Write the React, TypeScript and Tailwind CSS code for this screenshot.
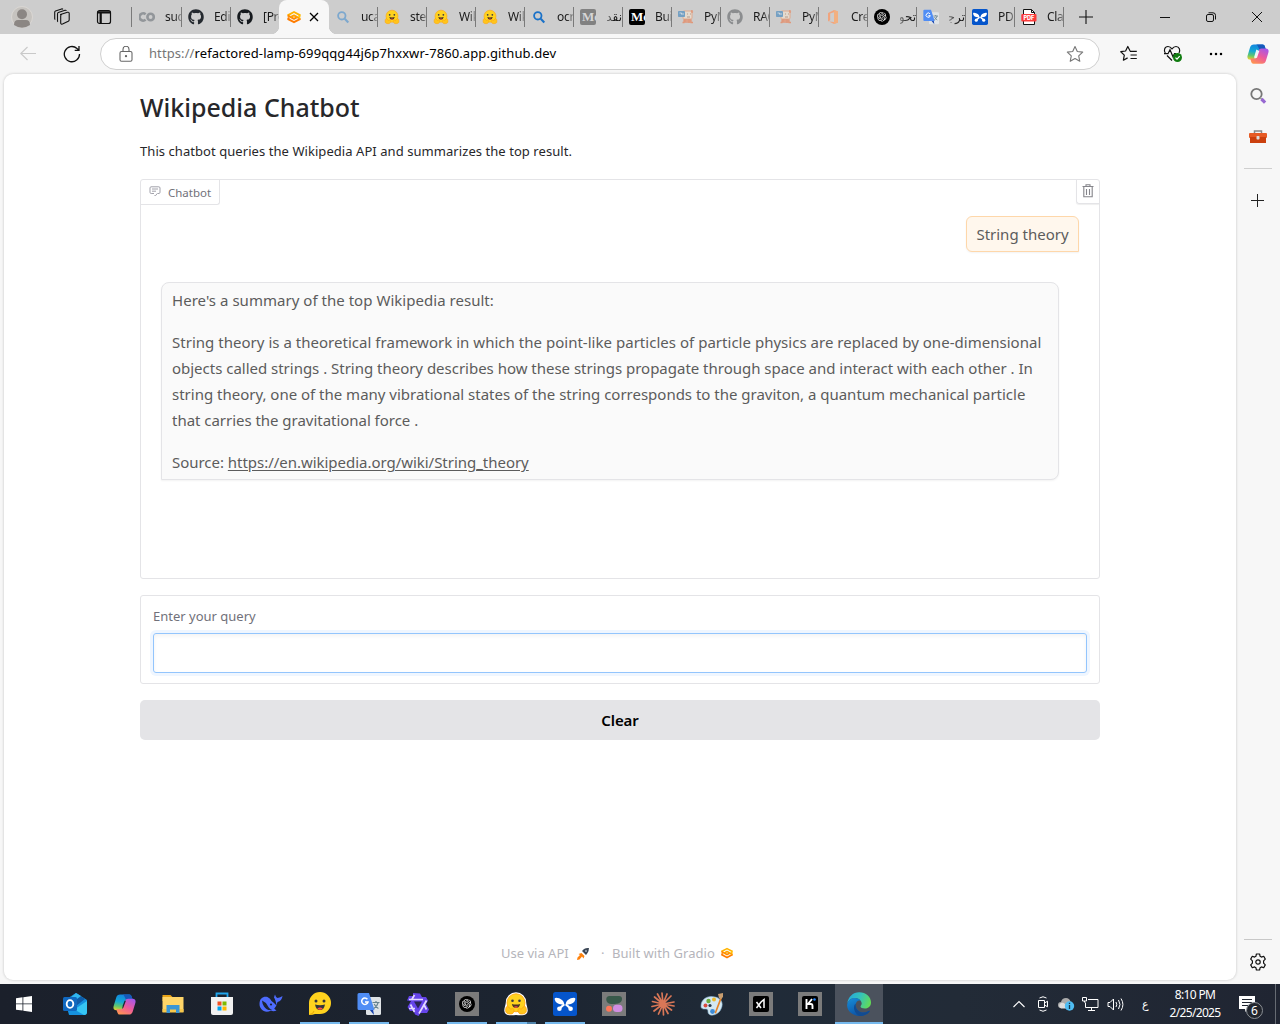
import React from 'react';
import { FaGithub } from 'react-icons/fa';
import { RiOpenaiFill } from 'react-icons/ri';

type P = { className?: string };

const Colab = () => (
  <svg viewBox="0 0 16 16" className="size-4" fill="none" stroke="#92969a" strokeWidth="2.6">
    <path d="M6.6 5.4A3.6 3.6 0 1 0 6.6 10.6" />
    <circle cx="11.6" cy="8" r="3.2" />
  </svg>
);

const Gradio = ({ className = 'size-4' }: P) => (
  <svg viewBox="0 0 16 16" className={className} fill="none" strokeWidth="1.900" strokeLinejoin="round">
    <path d="M1.600 6.400 8 3l6.400 3.400" stroke="#ffb400" />
    <path d="M1.600 9.800 8 13.200l6.400-3.400" stroke="#ff7c00" />
    <path d="M1.600 6.400 8 9.800l3-1.600" stroke="#ff8a00" />
    <path d="m4.600 8.200L8 6.400l6.400 3.400" stroke="#ffa000" />
    <path d="M14.400 6.400 12.500 7.600" stroke="#ffc400" />
    <path d="M1.600 9.800 3.400 8.700" stroke="#ff7c00" />
  </svg>
);

const Search = ({ color }: { color: string }) => (
  <svg viewBox="0 0 16 16" className="size-4" fill="none" stroke={color} strokeWidth="1.8">
    <circle cx="6.8" cy="6.8" r="3.7" />
    <path d="m9.7 9.7 3.6 3.8" strokeWidth="2.1" />
  </svg>
);

const Hug = ({ className = 'size-4', outline = false }: P & { outline?: boolean }) => (
  <svg viewBox="0 0 24 24" className={className}>
    {outline && (
      <path d="M12 .2a10.200 10.200 0 0 0-10.200 10.300c0 2-1.800 6.500-1.500 8.500.3 3.100 3.200 4.500 6 4.300 2 .2 3.900-.2 5.700-.2s3.700.4 5.700.2c2.800.2 5.700-1.200 6-4.300.3-2-1.500-6.500-1.500-8.500A10.200 10.200 0 0 0 12 .2z" fill="#fff" />
    )}
    <circle cx="12" cy="10.8" r="9" fill="#ffd21e" stroke="#ffa512" strokeWidth=".9" />
    <path d="M7.900 12q4.100 1.200 8.200 0-.7 4-4.100 4t-4.100-4z" fill="#4a3524" />
    <path d="M9.800 14.900q2.200-1.300 4.400 0-2.200 1.800-4.400 0z" fill="#f2524d" />
    <circle cx="8.500" cy="8.700" r="1.300" fill="#3a3b45" />
    <circle cx="15.500" cy="8.700" r="1.300" fill="#3a3b45" />
    <path d="M2.200 15.200c1-1.800 2.300-.5 3 .6l1.800 1.500c1.600-1.700 3.200-.4 3 1.600-.1 2.200-1.500 3.200-4 3.100-2.800-.1-4.400-1.200-4.400-3.400 0-1.200.1-2.400.6-3.400zM21.800 15.200c-1-1.800-2.300-.5-3 .6L17 17.300c-1.600-1.700-3.200-.4-3 1.600.1 2.200 1.500 3.200 4 3.100 2.800-.1 4.400-1.200 4.400-3.400 0-1.200-.1-2.400-.6-3.400z" fill="#ffc51c" stroke="#ff9d0b" strokeWidth=".7" />
  </svg>
);

const Medium = ({ dim = false }: { dim?: boolean }) => (
  <span className={`flex size-4 items-center overflow-hidden rounded-[2px] pl-0.5 font-['Liberation_Serif',serif] text-[13px] leading-4 font-bold ${dim ? 'bg-[#818181] text-[#d6d6d6]' : 'bg-black text-white'}`}>
    Me
  </span>
);

const Pdfy = () => (
  <svg viewBox="0 0 16 16" className="size-4 opacity-60">
    <rect x="5" y="2" width="9" height="8" rx="1" fill="#f5e4d0" stroke="#ee9365" />
    <rect y="2" width="7" height="6" rx=".8" fill="#3c83bd" />
    <path d="M1.500 4h2v1.600M5 4v2" stroke="#fff" fill="none" strokeWidth=".7" />
    <path d="M6 11h7v2h-7zM4.500 13.500h2M12.500 13.500H15M7 10v3m4-3v4M13 2l2 1M14 1v3" stroke="#ec7645" strokeWidth="1.300" fill="#f2b394" />
    <path d="M9 5h1m2 0h1M9 8h3" stroke="#945d42" strokeWidth=".8" />
  </svg>
);

const Office = () => (
  <svg viewBox="0 0 16 16" className="size-4">
    <path d="m9 1 4 1.600v10.800L9 15l-5-2.500 5 .6V3.200L5.200 4.400v6.800L3 12.400V4z" fill="#f0a57f" />
    <path d="m9 1 4 1.600v10.800L9 15z" fill="#f2b080" />
  </svg>
);

const Gpt = ({ className = 'size-4' }: P) => (
  <span className={`flex items-center justify-center rounded-full bg-black text-white ${className}`}>
    <RiOpenaiFill className="size-[72%]" />
  </span>
);

const Translate = ({ className = 'size-4' }: P) => (
  <svg viewBox="0 0 24 24" className={className}>
    <rect x="9" y="5" width="15" height="18" rx="1.500" fill="#dfe3e6" />
    <path d="m12 17 5 6-1-6z" fill="#1a45ad" />
    <path d="M2 1h10l5.500 17H2a1.500 1.500 0 0 1-1.500-1.500v-14A1.500 1.500 0 0 1 2 1z" fill="#4f8df5" />
    <path d="M10.400 7.200A3.200 3.200 0 1 0 11 10H8" stroke="#fff" strokeWidth="1.500" fill="none" />
    <path d="M15.500 10.500h7M19 9v1.500m2.200 0q-1 4-4.400 6m.4-4.500q1.500 3 4.200 4.500" stroke="#668390" strokeWidth="1.200" fill="none" />
  </svg>
);

const Butterfly = ({ className = 'size-4' }: P) => (
  <svg viewBox="0 0 24 24" className={className}>
    <rect width="24" height="24" rx="2.500" fill="#0555cb" />
    <path d="M11.300 12.200C10.800 8.500 7.500 6 3.200 5.800 1.800 5.800 1.400 6.500 1.800 7.800c1 3.300 3.800 5.300 9.500 4.400zM12.700 12.200c.5-3.700 3.800-6.200 8.100-6.400 1.400 0 1.800.7 1.400 2-1 3.300-3.800 5.300-9.500 4.400z" fill="#fff" />
    <path d="M3.500 6.500 20 18M20.500 6.500 4 18" stroke="none" />
    <path d="M11.300 12.200 6.500 16.500M12.700 12.200l4.800 4.300" stroke="#fff" strokeWidth="2.200" />
    <circle cx="6.400" cy="16.700" r="2.300" fill="#fff" />
    <circle cx="17.600" cy="16.700" r="2.300" fill="#fff" />
  </svg>
);

const PdfFile = () => (
  <svg viewBox="0 0 16 16" className="size-4">
    <path d="M2.500.5h8l3 3v12h-11z" fill="#fff" stroke="#111" />
    <path d="M10.500.5v3h3" fill="none" stroke="#111" />
    <rect x=".3" y="5" width="15.200" height="7.600" rx="1" fill="#fb3b3b" />
    <text x="7.900" y="10.900" fontSize="5.600" fontWeight="800" textAnchor="middle" fill="#fff" fontFamily="Inter, sans-serif">PDF</text>
  </svg>
);

const Copilot = ({ className = 'size-6', id }: P & { id: string }) => (
  <svg viewBox="0 0 24 24" className={className}>
    <defs>
      <linearGradient id={id + 'a'} x1=".4" y1="0" x2=".2" y2="1">
        <stop stopColor="#1485df" /><stop offset=".45" stopColor="#13a8d5" /><stop offset=".75" stopColor="#62c66d" /><stop offset="1" stopColor="#e3d22f" />
      </linearGradient>
      <linearGradient id={id + 'b'} x1=".8" y1="0" x2=".2" y2="1">
        <stop stopColor="#a657e8" /><stop offset=".5" stopColor="#ee5a9b" /><stop offset="1" stopColor="#ff954f" />
      </linearGradient>
    </defs>
    <path d="M13 1.500h4c1.400 0 2 .8 2.400 2.100L20.500 7h-4.300c-1.500 0-2.300.8-2.800 2.200l-2.100 6.300c-.6 1.700-1.400 2.500-3 2.500H3.400C1 18-.1 16.400.7 13.500L3.300 5c.7-2.400 2-3.500 4.200-3.500z" fill={`url(#${id}a)`} />
    <path d="M13 1.500h4c1.400 0 2 .8 2.400 2.100L20.500 7h-4.300c-1 0-1.700.4-2.200 1.100L11.800 3.500c-.4-1.300-1.300-2-2.700-2z" fill="#1658ba" />
    <path d="M11 22.500H7c-1.400 0-2-.8-2.400-2.100L3.500 17h4.300c1.500 0 2.300-.8 2.800-2.200l2.100-6.300c.6-1.700 1.400-2.500 3-2.500h4.900C23 6 24.100 7.600 23.300 10.500L20.700 19c-.7 2.400-2 3.500-4.200 3.500z" fill={`url(#${id}b)`} />
    {id === 'task'
      ? <path d="M13.500 8 10.700 15.500 9.500 16.800 10.200 13 12 8z" fill="#1c2430" />
      : <path d="m10.200 7.200 3.200 1.400-2.500 7.600-2.600.8-.5-1.800z" fill="#fff" opacity=".9" />}
  </svg>
);

const tabs: { icon: React.ReactNode; text: string; active?: boolean; rtl?: boolean }[] = [
  { icon: <Colab />, text: 'sucd' },
  { icon: <FaGithub className="size-4 text-[#24292f]" />, text: 'Edit' },
  { icon: <FaGithub className="size-4 text-[#161a1e]" />, text: '[Pro' },
  { icon: <Gradio />, text: '', active: true },
  { icon: <Search color="#7da8ce" />, text: 'uca' },
  { icon: <Hug />, text: 'ste' },
  { icon: <Hug />, text: 'Wiki' },
  { icon: <Hug />, text: 'Wiki' },
  { icon: <Search color="#1b72c8" />, text: 'ocr' },
  { icon: <Medium dim />, text: 'نقد', rtl: true },
  { icon: <Medium />, text: 'Buil' },
  { icon: <Pdfy />, text: 'PyM' },
  { icon: <FaGithub className="size-4 text-[#8b8d8f]" />, text: 'RAG' },
  { icon: <Pdfy />, text: 'PyM' },
  { icon: <Office />, text: 'Cre' },
  { icon: <Gpt />, text: 'تحو', rtl: true },
  { icon: <Translate />, text: 'ترج\u200d', rtl: true },
  { icon: <Butterfly />, text: 'PD' },
  { icon: <PdfFile />, text: 'Cla' },
];

function TabStrip() {
  return (
    <header className="flex h-[34px] shrink-0 items-center bg-[#cdcdcd]">
      <svg viewBox="0 0 24 24" className="ml-2.5 size-6">
        <circle cx="12" cy="12" r="10.500" fill="#c6c3bf" stroke="#dedbd7" strokeWidth=".8" />
        <circle cx="12" cy="9.300" r="5" fill="#8b8683" />
        <path d="M4 20q0-5 4-5h8q4 0 4 5-8 5.500-16 0z" fill="#8b8683" />
      </svg>
      <svg viewBox="0 0 18 18" className="ml-[19px] size-[18px]" fill="none" stroke="#111" strokeWidth="1.100" strokeLinejoin="round">
        <path d="m7.500 6.500 7-2.200q1.500-.3 1.700 1v6.400q0 1-.9 1.500l-5.800 2.900q-1.500.5-1.800-1V8q0-1 .8-1.400z" />
        <path d="M5 13.700q-.5-.2-.5-1V6q0-1 .8-1.400L12 2.300q1-.3 1.400.6M2.300 11.500q-.6-.2-.6-1V4.300q0-1 .8-1.400L8.700.9q.8-.2 1.300.4" />
      </svg>
      <svg viewBox="0 0 16 16" className="ml-[25px] size-4" fill="none" stroke="#111" strokeWidth="1.200">
        <rect x="1.500" y="1.700" width="13" height="12.800" rx="2" />
        <path d="M1.500 3.300h13M4.700 4v10.500" strokeWidth="2.200" />
      </svg>
      <div className="ml-[19px] h-5 w-px bg-[#7a7a7a]" />
      <div className="ml-px flex h-full">
        {tabs.map((t, i) =>
          t.active ? (
            <div key={i} className="relative -ml-px flex h-full w-[50px] items-center rounded-t-lg bg-[#f7f7f7] pl-[7px]">
              <span className="absolute bottom-0 -left-2 size-2 bg-[radial-gradient(circle_at_0_0,#cdcdcd_8px,#f7f7f7_8.5px)]" />
              <span className="absolute -right-2 bottom-0 size-2 bg-[radial-gradient(circle_at_100%_0,#cdcdcd_8px,#f7f7f7_8.5px)]" />
              {t.icon}
              <svg viewBox="0 0 10 10" className="ml-[7px] size-2.5 text-black" stroke="currentColor" strokeWidth="1.300"><path d="m1 1 8 8M9 1 1 9" /></svg>
            </div>
          ) : (
            <div key={i} className="flex h-full w-[49px] items-center pl-1.5">
              {t.icon}
              <span
                dir={t.rtl ? 'rtl' : 'ltr'}
                className={`ml-2.5 w-4 overflow-hidden text-[12px] leading-5 tracking-[-0.3px] whitespace-nowrap text-[#1a1a1a] ${t.rtl ? "font-['DejaVu_Sans',sans-serif] text-[11px] [mask-image:linear-gradient(to_left,#000_50%,#0006)]" : '[mask-image:linear-gradient(to_right,#000_60%,#0005)]'}`}
              >
                {t.text}
              </span>
              {i !== 2 && <span className="h-5 w-px bg-[#7a7a7a]" />}
            </div>
          ),
        )}
      </div>
      <svg viewBox="0 0 14 14" className="ml-[15px] size-3.5" stroke="#111" strokeWidth="1.100"><path d="M7 0v14M0 7h14" /></svg>
      <div className="ml-auto flex items-center">
        <svg viewBox="0 0 10 10" className="size-2.5" stroke="#111"><path d="M0 5.500h10" /></svg>
        <svg viewBox="0 0 10 10" className="ml-9 size-2.5" fill="none" stroke="#111"><rect x=".5" y="2.500" width="7" height="7" rx="1.500" /><path d="M2.500.8h4.500q2.500 0 2.500 2.500v4.200" /></svg>
        <svg viewBox="0 0 10 10" className="mr-[18px] ml-9 size-2.5" stroke="#111"><path d="m0 0 10 10M10 0 0 10" /></svg>
      </div>
    </header>
  );
}

function Toolbar() {
  return (
    <div className="flex h-10 shrink-0 items-center bg-[#f7f7f7]">
      <svg viewBox="0 0 16 16" className="ml-5 size-4" fill="none" stroke="#c9c9c9" strokeWidth="1.100"><path d="M16 7.500H1M7.500 1 .8 7.500l6.700 6.500" /></svg>
      <svg viewBox="0 0 18 18" className="ml-[27px] size-[18px]" fill="none" stroke="#111" strokeWidth="1.300"><path d="M16.500 9A7.600 7.600 0 1 1 14 3.500L15.800 5M16 1v4.300h-4.300" /></svg>
      <div className="ml-[19px] flex h-8 w-[1000px] items-center rounded-full border border-[#cfcfcf] bg-white">
        <svg viewBox="0 0 14 16" className="ml-[18px] h-4 w-3.5" fill="none" stroke="#686868" strokeWidth="1.100"><rect x="1" y="5.500" width="12" height="9.700" rx="1.500" /><path d="M4 5.500V3.300a3 3 0 0 1 6 0v2.200" /><circle cx="7" cy="10.200" r=".6" fill="#555" /></svg>
        <span className="ml-4 text-[13px] tracking-[0.09px] whitespace-nowrap text-black"><span className="text-[#767676]">https://</span>refactored-lamp-699qqg44j6p7hxxwr-7860.app.github.dev</span>
        <svg viewBox="0 0 18 18" className="mr-[15px] ml-auto size-[18px]" fill="none" stroke="#777" strokeWidth="1.100" strokeLinejoin="round"><path d="m9 1.500 2.300 5 5.400.6-4 3.700 1.100 5.500L9 13.500l-4.800 2.800 1.100-5.500-4-3.700 5.400-.6z" /></svg>
      </div>
      <svg viewBox="0 0 18 18" className="ml-5 size-[18px]" fill="none" stroke="#111" strokeWidth="1.200" strokeLinejoin="round"><path d="M10 5.800 7.800 1.500 5.600 6l-4.800.7 3.500 3.400-.9 5.100 4.200-2.300M9.800 6.300h7M10.500 10h6.300M10.500 13.500h6.300" /></svg>
      <svg viewBox="0 0 20 18" className="ml-[25px] h-[18px] w-5" fill="none" stroke="#111" strokeWidth="1.200">
        <path d="M2.300 8.200C.5 5.700 1.500 1.500 5 1.500c2 0 3 1 4 2.300 1-1.300 2-2.300 4-2.300 3.500 0 4.500 4 3 6.500M1 8.700h4l2-4 3 7 1.500-3h1.500M4 10.500l5 5" />
        <circle cx="14.500" cy="12.500" r="4.500" fill="#107c10" stroke="none" /><path d="m12.500 12.600 1.500 1.500 2.700-2.900" stroke="#fff" />
      </svg>
      <svg viewBox="0 0 14 4" className="ml-[26px] h-1 w-3.5"><circle cx="2" cy="2" r="1.250" /><circle cx="7" cy="2" r="1.250" /><circle cx="12" cy="2" r="1.250" /></svg>
      <Copilot id="bar" className="ml-6 size-[22px]" />
    </div>
  );
}

function Page() {
  return (
    <main className="ml-1 flex h-[906px] w-[1232px] flex-col rounded-[9px] bg-white px-[136px] shadow-[0_0_2px_1px_#dedede]">
      <h1 className="mt-[13px] text-[25px] leading-10 font-medium whitespace-nowrap text-[#27272a]">Wikipedia Chatbot</h1>
      <p className="mt-3.5 text-[13px] leading-5 tracking-[0.06px] whitespace-nowrap text-[#27272a]">This chatbot queries the Wikipedia API and summarizes the top result.</p>

      <section className="mt-[18px] flex h-[400px] shrink-0 flex-col rounded-[3px] border border-[#e4e4e7]">
        <div className="flex items-start justify-between">
          <div className="flex h-[25px] w-[79px] items-center rounded-br-[3px] border-r border-b border-[#e4e4e7] pl-2">
            <svg viewBox="0 0 12 12" className="mb-0.5 size-3" fill="none" stroke="#a1a1aa"><path d="M8.500 8.500H10A1.200 1.200 0 0 0 11 7.300V3A1.200 1.200 0 0 0 9.800 1.800H2A1.200 1.200 0 0 0 1 3v4.300A1.200 1.200 0 0 0 2.200 8.500H5M3 4h6M3 6.200h4M5.500 10.500h1.200l1.500-2" /></svg>
            <span className="mt-0.5 ml-[7px] text-[11.500px] text-[#71717a]">Chatbot</span>
          </div>
          <div className="flex h-6 w-[23px] items-center justify-center rounded-bl-[3px] border-b border-l border-[#e4e4e7] shadow-[0_1px_1px_#0001]">
            <svg viewBox="0 0 12 14" className="mb-0.5 h-3.5 w-3" fill="none" stroke="#85858b" strokeWidth="1.100"><path d="M.5 2.500h11M4 2V.8h4V2M1.800 3v9.800h8.400V3M4.500 5v6M7.500 5v6" /></svg>
          </div>
        </div>
        <div className="mt-[11px] mr-5 flex h-9 w-[113px] items-center justify-center self-end rounded-t-md rounded-bl-md border border-[#fed7aa] bg-[#fff7ed] text-[15px] whitespace-nowrap text-[#5c5c5c] shadow-[0_1px_2px_#0000000d]">String theory</div>
        <article className="mt-[30px] ml-5 flex h-[198px] w-[898px] flex-col gap-4 rounded-t-lg rounded-br-lg border border-[#e4e4e7] bg-[#fafafa] px-2.5 pt-1 text-[15px] leading-[26px] whitespace-nowrap text-[#5c5c5c] shadow-[0_1px_2px_#0000000d]">
          <p className="tracking-[0.03px]">Here's a summary of the top Wikipedia result:</p>
          <p>
            <span className="tracking-[0.024px]">String theory is a theoretical framework in which the point-like particles of particle physics are replaced by one-dimensional</span><br />
            <span className="tracking-[-0.016px]">objects called strings . String theory describes how these strings propagate through space and interact with each other . In</span><br />
            <span className="tracking-[-0.008px]">string theory, one of the many vibrational states of the string corresponds to the graviton, a quantum mechanical particle</span><br />
            <span className="tracking-[-0.03px]">that carries the gravitational force .</span>
          </p>
          <p className="tracking-[-0.03px]">Source: <a className="underline underline-offset-2">https://en.wikipedia.org/wiki/String_theory</a></p>
        </article>
      </section>

      <section className="mt-4 flex h-[89px] shrink-0 flex-col rounded-[3px] border border-[#e4e4e7] px-3">
        <label className="mt-2.5 text-[13px] leading-5 text-[#71717a]">Enter your query</label>
        <input className="mt-[7px] h-10 w-full rounded-[3px] border border-[#93c5fd] shadow-[0_0_0_3px_#eff6ff,inset_0_2px_4px_#0000000d] outline-none" />
      </section>
      <button className="mt-4 h-10 shrink-0 rounded-[5px] bg-[#e4e4e7] text-[15px] font-semibold tracking-[-0.1px] text-black">Clear</button>
      <footer className="mt-[204px] ml-[361px] flex h-5 items-center text-[13px] whitespace-nowrap text-[#b5b5bb]">
        <span className="w-[68px]">Use via API</span>
        <svg viewBox="0 0 14 14" className="ml-[7px] size-3.5"><path d="M8 2q2.500-1.500 5-1-.1 3-1.500 5L10 8 6 4z" fill="#3b4656" /><path d="m5.500 6 3 3-1 2.500L6 9.500l-2.500 3L1 13l.5-2.500L4 8 2.500 7z" fill="#ff820d" /><circle cx="10" cy="4" r="1" fill="#a7b0bb" /></svg>
        <span className="ml-[11px] w-1">·</span>
        <span className="ml-[7px] w-[104px] tracking-[0.05px]">Built with Gradio</span>
        <Gradio className="mb-0.5 ml-1 size-3.5" />
      </footer>
    </main>
  );
}

function Sidebar() {
  return (
    <aside className="flex w-11 flex-col items-center">
      <svg viewBox="0 0 18 18" className="mt-[13px] mr-px size-[18px]" fill="none"><circle cx="7.500" cy="7" r="5.200" stroke="#777" strokeWidth="1.800" /><path d="m11 10.500 2 2" stroke="#999" strokeWidth="1.500" /><path d="m12.500 12 3.600 3.600" stroke="#9768d1" strokeWidth="3.200" /></svg>
      <svg viewBox="0 0 18 16" className="mt-6 h-4 w-[18px]"><path d="M5.500 5V2h7v3" fill="none" stroke="#888" strokeWidth="1.500" /><rect y="4" width="18" height="5" rx="1" fill="#e75b25" /><path d="M1 8h16v6H1z" fill="#cb400e" /><rect x="7.500" y="7" width="3" height="3.500" rx=".8" fill="#ddd" /></svg>
      <div className="mt-[23px] h-px w-7 bg-[#cfcfcf]" />
      <svg viewBox="0 0 13 13" className="mt-[25px] mr-px size-[13px]" stroke="#222"><path d="M6.500 0v13M0 6.500h13" /></svg>
      <div className="mt-auto h-px w-7 bg-[#c8c8c8]" />
      <svg viewBox="0 0 18 18" className="mt-[13px] mb-[13px] size-[18px]" fill="none" stroke="#111" strokeWidth="1.200" strokeLinejoin="round">
        <path d="M7.400 1h3.200l.5 2.300 1.300.8 2.300-.8 1.600 2.800-1.700 1.700v2.400l1.700 1.700-1.600 2.800-2.300-.8-1.300.8-.5 2.300H7.400l-.5-2.300-1.300-.8-2.300.8-1.600-2.800 1.700-1.700V7.800L1.700 6.100l1.600-2.800 2.300.8 1.300-.8z" /><circle cx="9" cy="9" r="2.200" />
      </svg>
    </aside>
  );
}

const Outlook = () => (
  <svg viewBox="0 0 24 24" className="size-6"><path d="M2 8 13 1l11 7v12a3 3 0 0 1-3 3H6z" fill="#1490df" /><path d="m5 7 8-6 9 6-9 7z" fill="#0f5ba7" /><path d="m8 5 5-4 5 3-8 6z" fill="#31b7ee" /><path d="m24 9-18 12 3 2h12q3 0 3-3z" fill="#36c6f4" /><path d="m7 15 14 8H9q-3 0-3-3z" fill="#1691de" /><rect y="5" width="14" height="14" rx="1.500" fill="#1068bf" /><ellipse cx="7" cy="12" rx="3.300" ry="3.900" fill="none" stroke="#fff" strokeWidth="1.900" /></svg>
);
const Folder = () => (
  <svg viewBox="0 0 24 24" className="size-6"><path d="M1.500 3h8l2 2v4h-10z" fill="#e8a317" /><path d="M1.500 5h21v15h-21z" fill="#ffd568" /><path d="M1.500 17h21v3.500h-21z" fill="#f8c84c" /><path d="M5.500 13h13v8h-3.500v-3.500H9V21H5.500z" fill="#3a96d6" /></svg>
);
const Store = () => (
  <svg viewBox="0 0 24 24" className="size-6"><path d="M6.500 6V1.500h11V6" fill="none" stroke="#21a5ec" strokeWidth="1.800" /><path d="M1 5h22v16a2 2 0 0 1-2 2H3a2 2 0 0 1-2-2z" fill="#f1f1f1" /><path fill="#f25022" d="M7.500 9.500h4v4h-4z" /><path fill="#7fba00" d="M12.500 9.500h4v4h-4z" /><path fill="#00a4ef" d="M7.500 14.500h4v4h-4z" /><path fill="#ffb900" d="M12.500 14.500h4v4h-4z" /></svg>
);
const Whale = () => (
  <svg viewBox="0 0 24 24" className="size-6"><path d="M15 5.500q.5-2 1-3 .6 2.700 2.500 3.500 3-.3 5-2-.6 5-5 6-1 4.500-3.300 6.800l2.300 1.700q-3 1.500-5.500.1C6 22 .2 17.500.5 11.500.7 6 4.500 4 8.500 5q3 1.300 4 4 2.500 1.500 5 4.500-1-6-2.500-8z" fill="#4d6bfe" /><path d="M3 8.500q3.500 1.500 5.500 5 2 4 4.800 4.400Q8 19 5 14.500 3.200 11.500 3 8.500z" fill="#1d2433" /><circle cx="12" cy="12.500" r="1.100" fill="#1d2433" /></svg>
);
const Smile = () => (
  <svg viewBox="0 0 24 24" className="size-6"><path d="M1 23V11A11 11 0 1 1 12 22H7q-2 1-6 1z" fill="#ffd21e" /><path d="M1.500 22.500q4-.5 4.500-3.500" stroke="#e3a607" fill="none" /><circle cx="8" cy="9" r="1.500" fill="#34343c" /><circle cx="16" cy="9" r="1.500" fill="#34343c" /><path d="M7 12.500q5 1.500 10 0-1 5.500-5 5.500t-5-5.500z" fill="#34343c" /><path d="M9.200 16.500q2.800-2 5.600 0-2.800 2.500-5.600 0z" fill="#ff5043" /></svg>
);
const Qwen = () => (
  <svg viewBox="0 0 24 24" className="size-6">
    <path d="m7 1 7 .5 2 3.500h4l2 3.500-2 3.500 3 5.500-2 3.500h-6.500L12.500 24 9 22.500 7.500 19H4L1.500 15 5 9 1 8.500 3 4h4z" fill="#6544e9" />
    <path d="M3 7.500h14M8.500 3 5.500 8M20.500 8.500l-7.500 13M17.500 12l3 5.500M8.500 20 4.500 12.500M3 16.500h6" fill="none" stroke="#e3d8ff" strokeWidth="1.700" />
    <path d="M8 9.500h8l-4 7z" fill="#292453" />
  </svg>
);
const Cohere = () => (
  <div className="flex size-6 items-center justify-center bg-[#7b7b7b]"><svg viewBox="0 0 18 18" className="size-[18px]"><path d="M4.500 1h9.500q3 0 3 3c0 5-7 5-11 5C.5 9-.5 1 4.500 1z" fill="#38594a" /><circle cx="4" cy="13.800" r="3" fill="#ff7759" /><rect x="8" y="9.800" width="9.500" height="7.200" rx="3.500" fill="#d18ee2" /></svg></div>
);
const Claude = () => (
  <svg viewBox="0 0 24 24" className="size-6" stroke="#d97757" strokeWidth="1.700" strokeLinecap="round"><path d="m12 12-1-11M12 12l4-10M12 12l8-8M12 12l11-2M12 12l11 2M12 12l8.500 6M12 12l5 9.500M12 12l.5 11M12 12l-4.500 10M12 12l-9 7M12 12 1 14.500M12 12 1.500 9.500M12 12 3.500 5M12 12 6.500 2" /></svg>
);
const Paint = () => (
  <svg viewBox="0 0 24 24" className="size-6"><path d="M1 14C1 7 8 3 15 5c6 1 9 6 6 12-3 7-13 8-13 3 0-3-1-3-3-3s-4 0-4-3z" fill="#d4e8f3" stroke="#8ab9d6" strokeWidth=".6" /><circle cx="5.500" cy="13.500" r="2" fill="#d94b40" /><circle cx="8.500" cy="9" r="2.200" fill="#6cad3d" /><circle cx="14" cy="7.500" r="2" fill="#edb92c" /><circle cx="10" cy="13.500" r="1.600" fill="#26394c" /><circle cx="12.500" cy="19.500" r="2.400" fill="#3e8cd7" /><path d="m20.500 5-6 16 1.500.5L22 6z" fill="#e68327" /><path d="m18 2 5-1v4l-2 2-2-1z" fill="#c79d70" /></svg>
);
const AiTile = () => (
  <div className="flex size-6 items-center justify-center bg-[#7b7b7b]"><svg viewBox="0 0 16 16" className="size-4"><rect width="16" height="16" rx="2" /><path d="m3.500 6 4.500 6M8 6l-4.500 6M8 6l3-2.500V12" fill="none" stroke="#fff" strokeWidth="1.500" /></svg></div>
);
const KimiTile = () => (
  <div className="flex size-6 items-center justify-center bg-[#7b7b7b]"><svg viewBox="0 0 16 16" className="size-4"><rect width="16" height="16" rx="2" /><path d="M4.500 3v10M10 3 6 8h3q1.500 0 1.500 2v3" fill="none" stroke="#fff" strokeWidth="1.900" /><circle cx="12.500" cy="3.500" r="1.300" fill="#2087ff" /></svg></div>
);
const Edge = () => (
  <svg viewBox="0 0 24 24" className="size-6">
    <defs><linearGradient id="eg" x1="0" y1=".3" x2="1" y2=".6"><stop stopColor="#25a8dc" /><stop offset=".5" stopColor="#35c2b8" /><stop offset="1" stopColor="#63dc55" /></linearGradient><linearGradient id="eb" x1="0" y1="0" x2=".5" y2="1"><stop stopColor="#168ed9" /><stop offset="1" stopColor="#0c51a3" /></linearGradient></defs>
    <path d="M.3 11.500C1 5 6 .3 12.200.3 19 .3 24 5 24 10.500c0 3.500-2.500 6-6 6-2.700 0-4.500-1-4.500-2 0-.8 1.200-1.300 1.200-3C14.700 8.500 11.500 6 8 6 4.500 6 1.500 8.200.3 11.500z" fill="url(#eg)" />
    <path d="M.2 12.500C.8 8.500 4.200 6 8 6c2.500 0 4.600 1 5.700 2.600-3-.7-5 1.400-5 4.400 0 4.500 4 8 8.500 7.500 2-.2 3.800-1 4.800-1.700.6-.3 1 .1.600.7-2 2.900-5.800 4.500-10.100 4.500C5.300 24-.6 18.500.2 12.500z" fill="url(#eb)" />
    <path d="M8.700 13c0 4.500 4 8 8.500 7.500 2-.2 3.800-1 4.800-1.700.6-.3 1 .1.600.7-2 2.900-5.800 4.500-9.600 4.500C9 23 7 18 7 16c0-2 .6-3.600 1.700-4.500z" fill="#124b91" />
  </svg>
);

const tasks: { icon: React.ReactNode; run?: boolean; split?: boolean; focus?: boolean }[] = [
  { icon: <Outlook /> }, { icon: <Copilot id="task" className="size-[23px]" /> }, { icon: <Folder /> }, { icon: <Store /> }, { icon: <Whale /> },
  { icon: <Smile />, run: true }, { icon: <Translate className="size-6" />, run: true }, { icon: <Qwen /> },
  { icon: <div className="flex size-6 items-center justify-center bg-[#7b7b7b]"><Gpt /></div>, run: true },
  { icon: <Hug className="size-6" outline />, split: true }, { icon: <Butterfly className="size-6" />, run: true },
  { icon: <Cohere /> }, { icon: <Claude /> }, { icon: <Paint /> }, { icon: <AiTile /> }, { icon: <KimiTile /> }, { icon: <Edge />, focus: true },
];

function Taskbar() {
  return (
    <footer className="flex h-10 shrink-0 items-center bg-[linear-gradient(90deg,#1b202b,#1c2430_40%,#202b38_60%,#222b37_75%,#202532)] text-white">
      <div className="flex w-12 justify-center"><svg viewBox="0 0 16 16" className="size-4" fill="#fff"><path d="M0 2.200 6.500 1.300v6.200H0zM7.300 1.200 16 0v7.500H7.300zM0 8.300h6.500v6.300L0 13.700zM7.300 8.300H16V16l-8.700-1.200z" /></svg></div>
      <div className="ml-[3px] flex h-full gap-px">
        {tasks.map((t, i) => (
          <div key={i} className={`relative flex h-full w-12 items-center justify-center ${t.focus ? 'bg-[#4b525d]' : ''}`}>
            {t.icon}
            {t.run && <span className="absolute bottom-0 left-1 h-0.5 w-10 bg-[#76b9ed]" />}
            {t.split && <span className="absolute bottom-0 left-1 flex h-0.5 w-10 bg-[#4f82a9]"><i className="w-[31px] bg-[#76b9ed]" /></span>}
            {t.focus && <span className="absolute inset-x-0 bottom-0 h-0.5 bg-[#76b9ed]" />}
          </div>
        ))}
      </div>
      <div className="ml-auto flex h-full items-center">
        <svg viewBox="0 0 12 8" className="h-2 w-3" fill="none" stroke="#fff" strokeWidth="1.100"><path d="m.5 7 5.500-5.500L11.500 7" /></svg>
        <svg viewBox="0 0 14 18" className="ml-[11px] h-[18px] w-3.5" fill="none" stroke="#fff"><path d="M3.500 3q3.500-2.500 7 0M3.500 15q3.500 2.500 7 0M2.500 5.500h6v7h-6zM8.500 8l3-1.800v5.600l-3-1.800" /></svg>
        <svg viewBox="0 0 17 14" className="ml-2 h-3.5 w-[17px]"><path d="M3 11a3 3 0 0 1 0-6q1-4 5-4 3.500 0 4.500 3.500L14 11z" fill="#aaa" /><path d="M3 11.500a3 3 0 0 1 0-5.500q2-1 4 1l4 4.500z" fill="#ddd" /><circle cx="11.500" cy="9" r="4.700" fill="#4fbdf3" /><path d="M11.500 8v4m0-6.200v1.200" stroke="#153b52" strokeWidth="1.300" /></svg>
        <svg viewBox="0 0 17 15" className="ml-[7px] h-[15px] w-[17px]" fill="none" stroke="#fff"><path d="M6 2.500h10v8H3.500v-5M.5.500h4v3.500h-4zM9.500 10.500v3M6 13.500h7M2.500 4v1.500" /></svg>
        <svg viewBox="0 0 17 15" className="ml-2 h-[15px] w-[17px]" fill="none" stroke="#fff"><path d="M1 5.500h2L6.500 2v11L3 9.500H1zM9 5q1.500 2.500 0 5M11.500 3q3 4.500 0 9M14 1.500q3.800 6 0 12" /></svg>
        <span className="mt-0.5 ml-[18px] w-2 font-['DejaVu_Sans',sans-serif] text-[11px]">ع</span>
        <div className="ml-[18px] w-[54px] text-center text-[12px] leading-[18px] tracking-[-0.65px] whitespace-nowrap"><div>8:10 PM</div><div>2/25/2025</div></div>
        <div className="relative ml-[17px] h-full w-[25px]">
          <svg viewBox="0 0 16 16" className="mt-3 size-4"><path d="M0 0h16v13H9l-2.500 3-.5-3H0z" fill="#fff" /><path d="M3 3.500h10M3 6.500h10M3 9.500h6" stroke="#1f2530" /></svg>
          <span className="absolute top-[18px] left-[7px] flex size-[17px] items-center justify-center rounded-full border border-[#8b9096] bg-[#22262e] text-[12px] leading-none">6</span>
        </div>
        <div className="mr-1 ml-[11px] h-full w-px bg-[#666b73]" />
      </div>
    </footer>
  );
}

export default function App() {
  return (
    <div className="flex h-[1024px] w-[1280px] flex-col overflow-hidden bg-[#f7f7f7] font-['Noto_Sans',sans-serif]">
      <TabStrip />
      <Toolbar />
      <div className="flex h-[910px] shrink-0"><Page /><Sidebar /></div>
      <Taskbar />
    </div>
  );
}
